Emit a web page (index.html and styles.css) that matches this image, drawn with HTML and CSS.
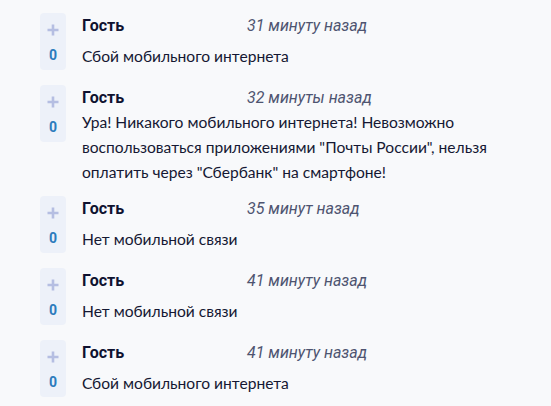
FILE: index.html
```html
<!DOCTYPE html>
<html lang="ru">
<head>
<meta charset="utf-8">
<link rel="stylesheet" href="styles.css">
</head>
<body>
<ul class="comments">
  <li class="comment">
    <div class="vote">
      <svg class="plus" width="12" height="12" viewBox="0 0 12 12"><path d="M6 0.5V11.5M0.5 6H11.5" stroke="#b5bee2" stroke-width="2.6"/></svg>
      <span class="score">0</span>
    </div>
    <div class="body">
      <div class="head"><span class="name">Гость</span><span class="time">31 минуту назад</span></div>
      <div class="text"><p>Сбой мобильного интернета</p></div>
    </div>
  </li>
  <li class="comment">
    <div class="vote">
      <svg class="plus" width="12" height="12" viewBox="0 0 12 12"><path d="M6 0.5V11.5M0.5 6H11.5" stroke="#b5bee2" stroke-width="2.6"/></svg>
      <span class="score">0</span>
    </div>
    <div class="body">
      <div class="head"><span class="name">Гость</span><span class="time">32 минуты назад</span></div>
      <div class="text"><p>Ура! Никакого мобильного интернета! Невозможно воспользоваться приложениями "Почты России", нельзя оплатить через "Сбербанк" на смартфоне!</p></div>
    </div>
  </li>
  <li class="comment">
    <div class="vote">
      <svg class="plus" width="12" height="12" viewBox="0 0 12 12"><path d="M6 0.5V11.5M0.5 6H11.5" stroke="#b5bee2" stroke-width="2.6"/></svg>
      <span class="score">0</span>
    </div>
    <div class="body">
      <div class="head"><span class="name">Гость</span><span class="time">35 минут назад</span></div>
      <div class="text"><p>Нет мобильной связи</p></div>
    </div>
  </li>
  <li class="comment">
    <div class="vote">
      <svg class="plus" width="12" height="12" viewBox="0 0 12 12"><path d="M6 0.5V11.5M0.5 6H11.5" stroke="#b5bee2" stroke-width="2.6"/></svg>
      <span class="score">0</span>
    </div>
    <div class="body">
      <div class="head"><span class="name">Гость</span><span class="time">41 минуту назад</span></div>
      <div class="text"><p>Нет мобильной связи</p></div>
    </div>
  </li>
  <li class="comment">
    <div class="vote">
      <svg class="plus" width="12" height="12" viewBox="0 0 12 12"><path d="M6 0.5V11.5M0.5 6H11.5" stroke="#b5bee2" stroke-width="2.6"/></svg>
      <span class="score">0</span>
    </div>
    <div class="body">
      <div class="head"><span class="name">Гость</span><span class="time">41 минуту назад</span></div>
      <div class="text"><p>Сбой мобильного интернета</p></div>
    </div>
  </li>
</ul>
</body>
</html>
```
FILE: styles.css
```css
html, body {
  margin: 0;
  padding: 0;
  background: #f8f9fb;
  font-family: Roboto, sans-serif;
}

.comments {
  list-style: none;
  margin: 0;
  padding: 13px 0 0 40px;
  display: flex;
  flex-direction: column;
  gap: 11px;
}

.comment {
  display: flex;
  align-items: flex-start;
  gap: 16px;
}

.vote {
  width: 26px;
  height: 57px;
  flex: none;
  background: #edf1f9;
  border-radius: 4px;
  display: flex;
  flex-direction: column;
  align-items: center;
  box-sizing: border-box;
  padding-top: 11px;
}

.plus {
  display: block;
  width: 12px;
  height: 12px;
}

.score {
  margin-top: 11px;
  font-size: 14px;
  line-height: 16px;
  font-weight: 700;
  color: #2b7bbd;
}

.body {
  flex: 1;
  min-height: 61px;
  display: flex;
  flex-direction: column;
}

.head {
  display: grid;
  grid-template-columns: 165px auto;
  align-items: baseline;
  line-height: 25px;
}

.name {
  font-size: 16px;
  font-weight: 700;
  color: #0f1230;
}

.time {
  font-size: 16px;
  font-style: italic;
  color: #4e5470;
}

.text {
  flex: 1;
  display: flex;
  align-items: center;
}

.text p {
  margin: 0;
  font-family: Lato, Roboto, sans-serif;
  font-size: 15.6px;
  line-height: 25px;
  color: #151833;
  max-width: 440px;
}
```
